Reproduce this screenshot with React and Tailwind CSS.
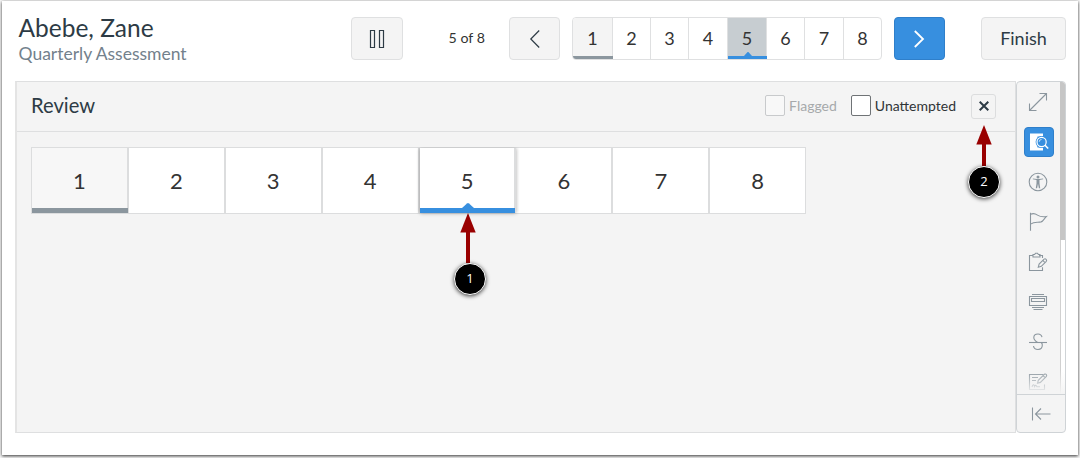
import React from 'react';
import clsx from 'clsx';

const questions = [1, 2, 3, 4, 5, 6, 7, 8];
const currentQuestion = 5;

// widths of the cells in the top navigation strip
const stripWidths = [
  'w-[40px]', 'w-[38px]', 'w-[38px]', 'w-[39px]',
  'w-[39px]', 'w-[38px]', 'w-[39px]', 'w-[37px]'
];

const Icon = ({ className, children }) => (
  <svg
    viewBox="0 0 20 20"
    className={clsx('w-5 h-5 shrink-0', className)}
    fill="none"
    stroke="currentColor"
    strokeWidth="1.1"
  >
    {children}
  </svg>
);

const ExpandIcon = () => (
  <Icon>
    <path d="M1.5 18.5 18.5 1.5M11.5 1.5h7v7M8.5 18.5h-7v-7" />
  </Icon>
);

const ReviewIcon = () => (
  <Icon className="text-white">
    <path d="M1 1.5h13v3H8.5v11H14v3H1z" fill="currentColor" stroke="none" />
    <circle cx="12.6" cy="10" r="6" fill="#378fdf" stroke="none" />
    <circle cx="12.6" cy="10" r="4.6" strokeWidth="1.2" />
    <path d="M10.2 9.8a2.5 2.5 0 0 1 2.4-2.4" strokeWidth=".7" />
    <path d="m16 13.3 3.2 3.2" strokeWidth="1.6" />
  </Icon>
);

const AccessibilityIcon = () => (
  <Icon>
    <circle cx="10" cy="10" r="8.8" />
    <circle cx="10" cy="4.9" r="1.5" fill="currentColor" stroke="none" />
    <path d="M4.8 7.2 8.5 8v3.2l-.7 5h1.3l.9-4.4.9 4.4h1.3l-.7-5V8l3.7-.8-.1-.8-3.9.7H8.8l-3.9-.7z" fill="currentColor" stroke="none" />
  </Icon>
);

const FlagIcon = () => (
  <Icon>
    <path d="M2.5.8v18" />
    <path d="M2.5 2.3c2.6-1.3 5-.6 7 .8 2.5 1.7 5 2 8.8 1.5-2.2 2-3 4.700-5.2 5.3-3.8.9-6.2-.8-10.6 2.2" />
  </Icon>
);

const NotesIcon = () => (
  <Icon>
    <path d="M5 3.5H1.5v15h13v-3.2M11 3.5h3.5V6" />
    <path d="M5 5V2.5h1.5l1-1.2h2l1 1.2H12V5z" />
    <path d="m10.3 15.2.8-3.1 5-5c1.4-1 3.2.8 2.2 2.2l-5 5zM14.8 8.4l2.2 2.2" />
  </Icon>
);

const LineReaderIcon = () => (
  <Icon>
    <path d="M4 2.5h12M1.5 4.5h17v9h-17zM3.5 6.5h13v3h-13zM4 15.5h12M5.5 17.5h9" />
  </Icon>
);

const StrikeIcon = () => (
  <Icon>
    <path d="M1 10.5h18" />
    <path d="M14 5.200C13.5 3 12 2 10 2 7.5 2 5.8 3.5 5.8 5.600c0 2 1.4 3.5 3.9 4.900M13.3 10.5c.7.7 1 1.6 1 2.6 0 2.7-1.7 4.4-4.3 4.400-2.500 0-4.200-1.300-4.500-3.500" />
  </Icon>
);

const ScratchpadIcon = () => (
  <Icon>
    <path d="M15.5 2.5h-14v15h15v-5M4 5.5h6M4 8.5h4" />
    <path d="m9.500 11.300.8-3 6-6c1.400-1 3 .8 2.100 2.100l-6 6zM15 3.600l2.200 2.100M4 15c.8-3 2-3 2.500-.5.8-1.600 1.500-1.500 2.500.3h3" />
  </Icon>
);

const CollapseIcon = () => (
  <Icon>
    <path d="M1.5 3.5v13M4.5 10h15M10 4.5 4.5 10l5.5 5.5" />
  </Icon>
);

const tools = [
  { id: 'expand', icon: ExpandIcon },
  { id: 'review', icon: ReviewIcon, active: true },
  { id: 'accessibility', icon: AccessibilityIcon },
  { id: 'flag', icon: FlagIcon },
  { id: 'notes', icon: NotesIcon },
  { id: 'line-reader', icon: LineReaderIcon },
  { id: 'strike', icon: StrikeIcon },
  { id: 'scratchpad', icon: ScratchpadIcon }
];

const NavButton = ({ label, primary, className, children }) => (
  <button
    aria-label={label}
    className={clsx(
      'h-[43px] rounded border flex items-center justify-center shrink-0',
      primary ? 'bg-[#378fdf] border-[#2f7fca] text-white' : 'bg-[#f4f4f4] border-[#dfe0e1] text-[#2d3b45]',
      className
    )}
  >
    {children}
  </button>
);

const Header = () => (
  <header className="h-[79.5px] flex items-start pl-4 pr-3">
    <div className="w-[332.5px] pt-[11px] pl-[0.5px]">
      <h1 className="text-[24.5px] leading-8 text-[#2d3b45]">Abebe, Zane</h1>
      <p className="text-[17.5px] leading-5 text-[#73818c]">Quarterly Assessment</p>
    </div>
    <div className="flex items-center pt-4 flex-1">
      <NavButton label="Pause" className="w-[52px]">
        <svg viewBox="0 0 16 20" className="w-4 h-5" fill="none" stroke="currentColor" strokeWidth="1.2">
          <path d="M1.5 1.5h4v17h-4zM10.5 1.5h4v17h-4z" />
        </svg>
      </NavButton>
      <span className="w-[106.5px] pl-[22px] pb-px text-center text-[14.2px] text-[#333]">5 of 8</span>
      <NavButton label="Previous" className="w-[51px]">
        <svg viewBox="0 0 12 20" className="w-3 h-5" fill="none" stroke="currentColor" strokeWidth="1.2">
          <path d="M10.2 1.5 1.8 10l8.4 8.5" />
        </svg>
      </NavButton>
      <div className="ml-3 flex h-[43px] w-[310px] shrink-0 border border-[#dfe0e1] rounded overflow-hidden bg-white text-[18px] text-[#333]">
        {questions.map((n, i) => (
          <div
            key={n}
            className={clsx(
              'relative flex items-center justify-center shrink-0 pb-px',
              stripWidths[i],
              n < 8 && 'border-r border-[#dfe0e1]',
              n === 1 && 'bg-[#f4f4f4]',
              n === currentQuestion && 'bg-[#c7cdd1]'
            )}
          >
            {n}
            {n === 1 && <span className="absolute left-0 -right-px bottom-0 h-[3px] bg-[#8b969e]" />}
            {n === currentQuestion && <Marker className="h-[3px]" small />}
          </div>
        ))}
      </div>
      <NavButton label="Next" primary className="w-[51px] ml-3">
        <svg viewBox="0 0 12 20" className="w-3 h-5 -ml-px" fill="none" stroke="currentColor" strokeWidth="1.8">
          <path d="M1.8 2 10 10l-8.2 8" />
        </svg>
      </NavButton>
      <NavButton className="w-[85px] ml-auto text-[18px] pb-px">Finish</NavButton>
    </div>
  </header>
);

// Blue underline with the small pointer above its centre
const Marker = ({ className, small }) => (
  <span className={clsx('absolute -right-px left-0 bottom-0 bg-[#378fdf]', className)}>
    <svg
      viewBox="0 0 12 5"
      className={clsx('absolute left-1/2 -translate-x-1/2 bottom-full', small ? 'w-2 h-1' : 'w-3 h-[5px]')}
      preserveAspectRatio="none"
      fill="#378fdf"
    >
      <path d="M0 5 5 .4q1-.8 2 0L12 5z" />
    </svg>
  </span>
);

const Checkbox = ({ label, disabled }) => (
  <label className={clsx('flex items-center', disabled ? 'text-[#a6a9ab]' : 'text-[#2f3336]')}>
    <span
      className={clsx(
        'w-5 h-[21px] border rounded-[2px] mr-1',
        disabled ? 'border-[#c8cacc] bg-[#f8f8f8]' : 'border-[#6f7376] bg-white'
      )}
    />
    <span className="text-[14px]">{label}</span>
  </label>
);

const ReviewPanel = () => (
  <section className="w-[1001px] h-[352.5px] bg-[#f4f4f4] border border-l-2 border-[#dedfe0] border-l-[#e4e4e4]">
    <div className="h-[50px] border-b border-[#dedfe0] flex items-center pl-[14px] pr-[19px]">
      <h2 className="text-[20.2px] text-[#2d3b45] mr-auto pb-[2px]">Review</h2>
      <div className="flex items-center pb-px">
        <Checkbox label="Flagged" disabled />
        <div className="w-[14px]" />
        <Checkbox label="Unattempted" />
      </div>
      <button
        aria-label="Close"
        className="ml-[15px] w-[25px] h-[25px] border border-[#dcddde] rounded-[3px] flex items-center justify-center text-[#2d3b45]"
      >
        <svg viewBox="0 0 10 10" className="w-[10px] h-[10px]" stroke="currentColor" strokeWidth="2">
          <path d="m.7.7 8.6 8.6M9.3.7.7 9.3" />
        </svg>
      </button>
    </div>
    <div className="ml-[14px] mt-[15px] w-[775px] h-[67px] grid grid-cols-[repeat(7,96.9px)_1fr] border border-[#dcddde] bg-white text-[22px] text-[#333]">
      {questions.map((n) => (
        <div
          key={n}
          className={clsx(
            'relative flex items-center justify-center',
            n < 8 && 'border-r-2 border-[#dcddde]',
            n === 1 && 'bg-[#f7f7f7]',
            n === currentQuestion && 'z-10 shadow-[0_0_4px_rgba(0,0,0,0.35)] [clip-path:inset(0_-3px_-5px_-3px)]'
          )}
        >
          {n}
          {n === 1 && <span className="absolute left-0 -right-px bottom-0 h-[5px] bg-[#8b969e]" />}
          {n === currentQuestion && <Marker className="h-[5px]" />}
        </div>
      ))}
    </div>
  </section>
);

const Toolbar = () => (
  <aside className="w-[50px] h-[352.5px] bg-[#f4f4f4] border border-[#cfd3d6] rounded overflow-hidden text-[#8b969e]">
    <div className="relative h-[312px] flex overflow-hidden">
      <div className="w-[43px]">
        {tools.map(({ id, icon: ToolIcon, active }) => (
          <div key={id} className="h-10 flex items-center justify-center">
            <div
              className={clsx(
                'w-[30px] h-[30px] rounded flex items-center justify-center',
                active ? 'bg-[#378fdf] border border-[#2f7fca]' : 'pr-px'
              )}
            >
              <ToolIcon />
            </div>
          </div>
        ))}
      </div>
      <div className="w-[5px] h-full bg-white border-l border-[#d0d0d0]">
        <div className="-ml-px w-[6px] h-[158px] bg-[#c6c6c6]" />
      </div>
      <div className="absolute inset-x-0 bottom-0 h-[24px] bg-gradient-to-b from-[#f4f4f4]/0 to-[#f4f4f4]" />
    </div>
    <div className="h-[39px] border-t border-[#cfd3d6] flex items-center justify-center">
      <CollapseIcon />
    </div>
  </aside>
);

const Callout = ({ number, stemClass, circleClass, className }) => (
  <div className={clsx('absolute flex flex-col items-center w-9', className)}>
    <svg viewBox="0 0 16 20" className="w-4 h-5" fill="#990000">
      <path d="M8 0 15.7 19.5H.3z" />
    </svg>
    <div className={clsx('w-1 -mt-px bg-[#990000]', stemClass)} />
    <div
      className={clsx(
        "w-8 h-8 rounded-full bg-black border border-white shadow-[0_1px_4px_rgba(0,0,0,0.75)] flex items-center justify-center text-white text-[13px] font-['Open_Sans',sans-serif]",
        circleClass
      )}
    >
      {number}
    </div>
  </div>
);

const App = () => (
  <div className="relative w-[1080px] h-[458px] bg-[#f6f6f6] pt-px pl-[2px] overflow-hidden font-[Lato,sans-serif]">
    <div className="w-[1076px] h-[454px] bg-white shadow-[0_1px_3px_rgba(0,0,0,0.8)]">
      <Header />
      <main className="flex pl-[13px]">
        <ReviewPanel />
        <Toolbar />
      </main>
    </div>
    <Callout number={1} className="left-[450px] top-[213px]" stemClass="h-[31px]" circleClass="ml-[4px]" />
    <Callout number={2} className="left-[966px] top-[125px]" stemClass="h-[22px]" />
  </div>
);

export default App;
